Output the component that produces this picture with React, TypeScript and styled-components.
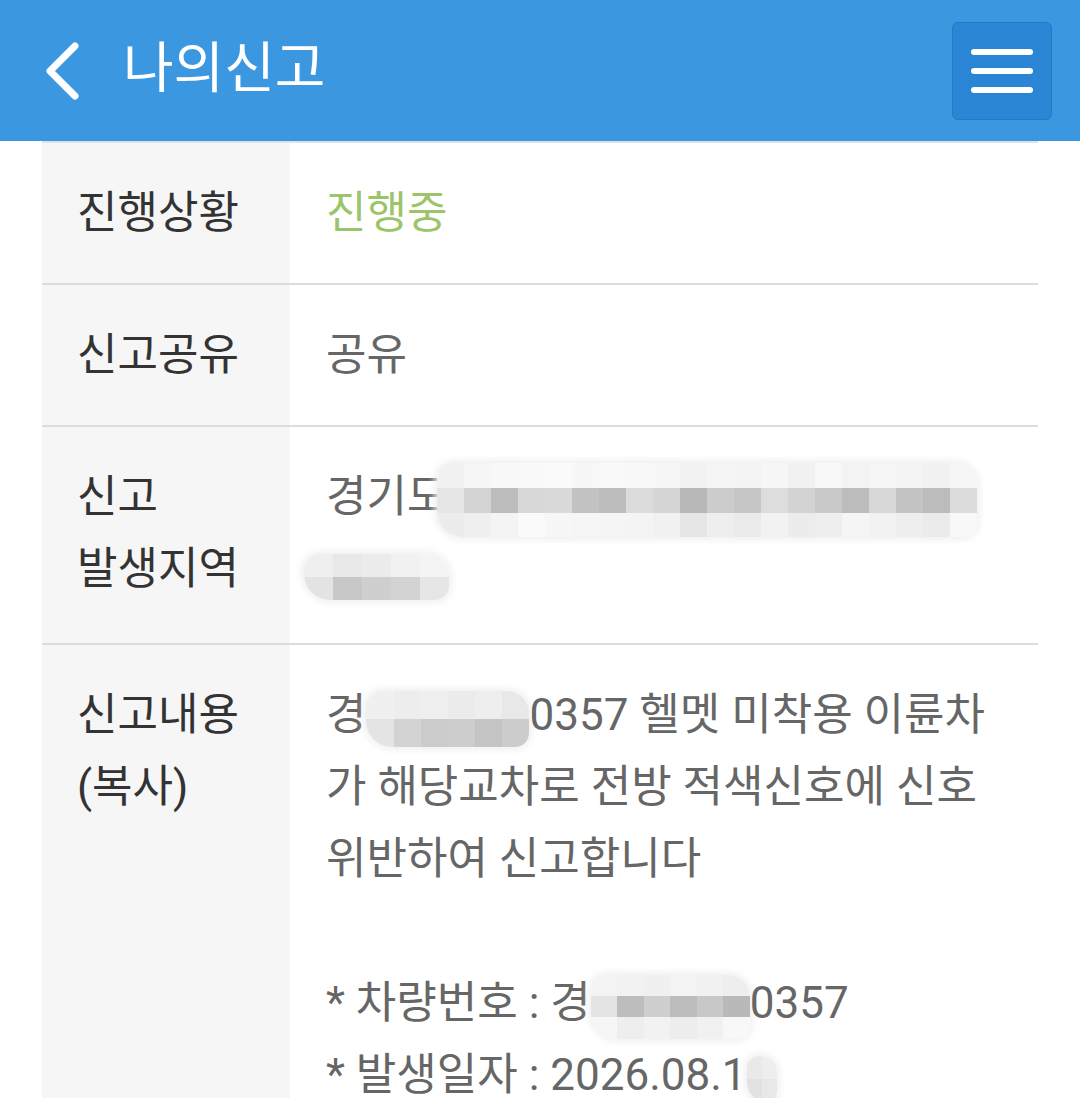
import React from 'react';
import styled, { createGlobalStyle } from 'styled-components';

const GlobalStyle = createGlobalStyle`
  html, body {
    margin: 0;
    padding: 0;
    background: #fff;
  }
  body {
    font-family: Roboto, "Noto Sans CJK KR", "Noto Sans", sans-serif;
    -webkit-font-smoothing: antialiased;
  }
`;

const Page = styled.div`
  width: 1080px;
  height: 1098px;
  overflow: hidden;
  background: #fff;
`;

const Header = styled.header`
  height: 141px;
  background: #3a97e0;
  display: flex;
  align-items: center;
  padding: 0 28px 0 44px;
  box-sizing: border-box;
`;

const BackButton = styled.button`
  border: 0;
  background: none;
  padding: 0;
  width: 40px;
  height: 60px;
  display: flex;
  align-items: center;
  cursor: pointer;
`;

const Title = styled.h1`
  margin: 0 0 4px 39px;
  flex: 1;
  color: #fff;
  font-size: 55px;
  font-weight: 400;
  line-height: 1;
`;

const MenuButton = styled.button`
  width: 100px;
  height: 98px;
  border-radius: 6px;
  border: 1px solid #2379c6;
  background: #2a85d4;
  display: flex;
  flex-direction: column;
  align-items: center;
  justify-content: center;
  gap: 13px;
  padding: 0;
  box-sizing: border-box;
  cursor: pointer;
`;

const MenuLine = styled.span`
  display: block;
  width: 62px;
  height: 6px;
  border-radius: 3px;
  background: #fff;
`;

const Table = styled.div`
  margin: 0 42px;
  border-top: 2px solid #dde3ea;
`;

const Row = styled.div`
  display: grid;
  grid-template-columns: 248px 1fr;
  border-bottom: 2px solid #dcdcdc;
`;

const Label = styled.div`
  background: #f6f6f6;
  color: #333;
  font-size: 44px;
  line-height: 72px;
  padding: 34px 16px 34px 35px;
`;

const Value = styled.div<{ $accent?: boolean }>`
  color: ${(p) => (p.$accent ? '#9cc56b' : '#666')};
  font-size: 44px;
  line-height: 72px;
  padding: 34px 16px 34px 36px;
`;

const Line = styled.div`
  white-space: nowrap;
`;

const Blank = styled.div`
  height: 72px;
`;

const Mosaic = styled.span<{ $cols: number; $w: number; $h: number; $shift?: number }>`
  display: inline-grid;
  grid-template-columns: repeat(${(p) => p.$cols}, 1fr);
  width: ${(p) => p.$w}px;
  height: ${(p) => p.$h}px;
  vertical-align: middle;
  margin-left: ${(p) => p.$shift ?? 0}px;
  border-radius: 16px 22px 14px 26px;
  overflow: hidden;
  box-shadow: 0 0 6px 3px rgba(240, 240, 240, 0.9);
`;

const Cell = styled.span<{ $c: string }>`
  display: block;
  background: ${(p) => p.$c};
`;

type RedactProps = {
  rows: string[][];
  w: number;
  h: number;
  shift?: number;
};

const Redact = ({ rows, w, h, shift }: RedactProps) => (
  <Mosaic $cols={rows[0].length} $w={w} $h={h} $shift={shift}>
    {rows.flat().map((c, i) => (
      <Cell key={i} $c={c} />
    ))}
  </Mosaic>
);

const addrRows = [
  ['#f1f1f1', '#f6f6f6', '#f8f8f8', '#f9f9f9', '#fafafa', '#f7f7f7', '#f9f9f9', '#f8f8f8', '#f7f7f7', '#f2f2f2', '#f5f5f5', '#f4f4f4', '#f7f7f7', '#f1f1f1', '#f8f8f8', '#f3f3f3', '#f6f6f6', '#f4f4f4', '#f1f1f1', '#f6f6f6'],
  ['#e6e6e6', '#d4d4d4', '#bcbcbc', '#d8d8d8', '#dadada', '#c2c2c2', '#bdbdbd', '#dcdcdc', '#d6d6d6', '#b8b8b8', '#cccccc', '#c6c6c6', '#dddddd', '#d3d3d3', '#c9c9c9', '#bcbcbc', '#d8d8d8', '#c4c4c4', '#bcbcbc', '#dcdcdc'],
  ['#ececec', '#efefef', '#f4f4f4', '#fafafa', '#f7f7f7', '#f6f6f6', '#f5f5f5', '#f4f4f4', '#f1f1f1', '#e6e6e6', '#eeeeee', '#ebebeb', '#f2f2f2', '#ececec', '#eeeeee', '#f5f5f5', '#f2f2f2', '#eeeeee', '#ebebeb', '#f8f8f8'],
];

const addrRows2 = [
  ['#efefef', '#e8e8e8', '#ececec', '#f1f1f1', '#f4f4f4'],
  ['#e3e3e3', '#c8c8c8', '#cfcfcf', '#d3d3d3', '#e6e6e6'],
];

const plateRows = [
  ['#f0f0f0', '#ededed', '#efefef', '#ebebeb', '#eeeeee', '#e8e8e8'],
  ['#e4e4e4', '#d3d3d3', '#cbcbcb', '#cdcdcd', '#c5c5c5', '#cccccc'],
];

const plateRows2 = [
  ['#f4f4f4', '#f2f2f2', '#f0f0f0', '#f3f3f3', '#f1f1f1', '#eeeeee'],
  ['#e4e4e4', '#bdbdbd', '#cfcfcf', '#bcbcbc', '#c8c8c8', '#b9b9b9'],
  ['#f6f6f6', '#eeeeee', '#f2f2f2', '#ededed', '#f1f1f1', '#f8f8f8'],
];

const dateRows = [
  ['#e9e9e9', '#eeeeee'],
  ['#e2e2e2', '#e8e8e8'],
];

const BackIcon = () => (
  <svg width="36" height="58" viewBox="0 0 36 58" fill="none">
    <polyline
      points="31,4 6,29 31,54"
      stroke="#fff"
      strokeWidth="7"
      strokeLinecap="round"
      strokeLinejoin="round"
    />
  </svg>
);

export default function App() {
  return (
    <Page>
      <GlobalStyle />
      <Header>
        <BackButton aria-label="뒤로">
          <BackIcon />
        </BackButton>
        <Title>나의신고</Title>
        <MenuButton aria-label="메뉴">
          <MenuLine />
          <MenuLine />
          <MenuLine />
        </MenuButton>
      </Header>
      <Table>
        <Row>
          <Label>진행상황</Label>
          <Value $accent>진행중</Value>
        </Row>
        <Row>
          <Label>신고공유</Label>
          <Value>공유</Value>
        </Row>
        <Row>
          <Label>
            신고
            <br />
            발생지역
          </Label>
          <Value>
            <Line>
              경기도
              <Redact rows={addrRows} w={540} h={74} shift={-10} />
            </Line>
            <Line>
              <Redact rows={addrRows2} w={145} h={46} shift={-22} />
            </Line>
          </Value>
        </Row>
        <Row>
          <Label>
            신고내용
            <br />
            (복사)
          </Label>
          <Value>
            <Line>
              경<Redact rows={plateRows} w={163} h={56} />
              0357 헬멧 미착용 이륜차
            </Line>
            <Line>가 해당교차로 전방 적색신호에 신호</Line>
            <Line>위반하여 신고합니다</Line>
            <Blank />
            <Line>
              * 차량번호 : 경<Redact rows={plateRows2} w={159} h={64} />
              0357
            </Line>
            <Line>
              * 발생일자 : 2026.08.1
              <Redact rows={dateRows} w={30} h={46} />
            </Line>
          </Value>
        </Row>
      </Table>
    </Page>
  );
}
